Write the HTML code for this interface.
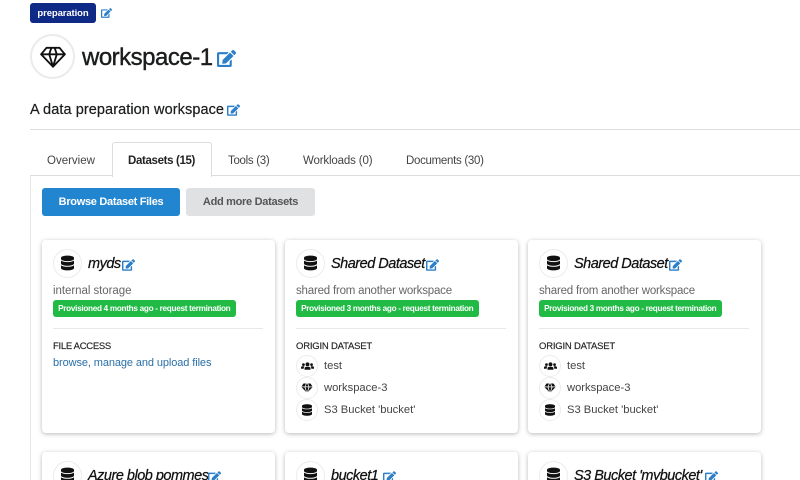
<!DOCTYPE html>
<html><head><meta charset="utf-8"><style>
html,body{margin:0;padding:0;width:800px;height:480px;overflow:hidden;background:#fff}
body{font-family:"Liberation Sans",sans-serif;color:#212529;position:relative}
.a{position:absolute;white-space:nowrap}
svg{position:absolute;display:block}
.card{position:absolute;width:232.5px;height:192.5px;background:#fff;border-radius:4px;box-shadow:0 1px 5px rgba(0,0,0,.28);overflow:hidden}
.wrap{position:absolute;left:0;top:0;width:800px;height:480px;overflow:hidden}
.circ{position:absolute;border-radius:50%;background:#fff;border:1px solid #ececec;box-sizing:border-box}
.name{position:absolute;left:46px;top:14px;font-size:14.5px;line-height:20px;font-style:italic;color:#111;white-space:nowrap;letter-spacing:-.5px;-webkit-text-stroke:.25px #111}
.sub{position:absolute;left:11px;top:44px;font-size:11.5px;line-height:15px;color:#666;white-space:nowrap;letter-spacing:-.2px}
.prov{position:absolute;left:11px;top:60px;width:182.5px;height:17px;background:#21ba45;border-radius:3px;color:#fff;font-size:8.2px;font-weight:bold;line-height:17px;text-align:center;white-space:nowrap;letter-spacing:-.3px}
.hr{position:absolute;left:11px;top:88px;width:210px;height:1px;background:#e8e8e8}
.h{position:absolute;left:11px;top:100px;font-size:9.5px;line-height:13px;color:#222;white-space:nowrap;letter-spacing:-.2px;-webkit-text-stroke:.15px #222}
.li{position:absolute;left:39px;font-size:11.2px;line-height:15px;color:#444;white-space:nowrap}
.tab{position:absolute;top:154px;font-size:11.5px;line-height:14px;color:#444;white-space:nowrap;letter-spacing:-.25px}
</style></head><body>
<svg width="0" height="0" style="position:absolute"><defs>
<symbol id="e" viewBox="0 0 576 512"><path fill="#2b7fc9" d="M402.6 83.2l90.2 90.2c3.8 3.8 3.8 10 0 13.8L274.4 405.6l-92.8 10.3c-12.4 1.4-22.9-9.1-21.5-21.5l10.3-92.8L388.8 83.2c3.8-3.8 10-3.8 13.8 0zm162-22.9l-48.8-48.8c-15.2-15.2-39.9-15.2-55.2 0l-35.4 35.4c-3.8 3.8-3.8 10 0 13.8l90.2 90.2c3.8 3.8 10 3.8 13.8 0l35.4-35.4c15.2-15.3 15.2-40 0-55.2zM384 346.2V448H64V128h229.8c3.2 0 6.2-1.3 8.5-3.5l40-40c7.6-7.6 2.2-20.5-8.5-20.5H48C21.5 64 0 85.5 0 112v352c0 26.5 21.5 48 48 48h352c26.5 0 48-21.5 48-48V306.2c0-10.7-12.9-16-20.5-8.5l-40 40c-2.2 2.3-3.5 5.3-3.5 8.5z"/></symbol>
<symbol id="d" viewBox="0 0 448 512"><path fill="#111" d="M448 73.143v45.714C448 159.143 347.667 192 224 192S0 159.143 0 118.857V73.143C0 32.857 100.333 0 224 0s224 32.857 224 73.143zM448 176v102.857C448 319.143 347.667 352 224 352S0 319.143 0 278.857V176c48.125 33.143 136.208 48.572 224 48.572S399.874 209.143 448 176zm0 160v102.857C448 479.143 347.667 512 224 512S0 479.143 0 438.857V336c48.125 33.143 136.208 48.572 224 48.572S399.874 369.143 448 336z"/></symbol>
<symbol id="g" viewBox="0 0 24 20"><path fill="none" stroke="#111" stroke-width="1.7" stroke-linejoin="round" d="M6 1.5h12l5 6-11 11.5L1 7.5zM1 7.5h22M8.5 7.5L12 19l3.500-11.500M8.500 7.500L10.500 1.500M15.500 7.500L13.500 1.500"/></symbol>
<symbol id="gs" viewBox="0 0 24 20"><path fill="#111" d="M5 1h5L7.500 7H1zM14 1h5l4 6h-6.500zM11.500 1h1L15 7H9zM1 8.500h6L10.500 18zM9 8.500h6L12 19zM17 8.500h6L13.500 18z"/></symbol>
<symbol id="u" viewBox="0 0 24 18"><g fill="#111"><circle cx="12" cy="6" r="3.600"/><circle cx="4.500" cy="6.500" r="2.500"/><circle cx="19.500" cy="6.500" r="2.500"/><path d="M6.500 16v-2.500C6.500 11.500 8 10.500 9.500 10.500h5c1.500 0 3 1 3 3V16zM0 14v-2c0-1.500 1-2.500 2.500-2.500H5c.5 0 1 .2 1.400.5C5.500 11 5 12.300 5 14zM24 14v-2c0-1.500-1-2.500-2.500-2.500H19c-.5 0-1 .2-1.400.5.900 1 1.400 2.300 1.400 4z"/></g></symbol>
</defs></svg>
<div class="wrap">
<div class="a" style="left:30px;top:3px;width:66px;height:20px;background:#0e2a86;border-radius:3px;color:#fff;font-size:9.500px;font-weight:bold;line-height:21px;text-align:center;letter-spacing:-.1px">preparation</div>
<svg style="left:101px;top:8px" width="11" height="10"><use href="#e"/></svg>

<div class="circ" style="left:30px;top:34px;width:45px;height:45px;border-width:2px;border-color:#ebebeb"></div>
<svg style="left:40px;top:46px" width="26" height="22"><use href="#g"/></svg>
<div class="a" style="left:82px;top:44px;font-size:24px;line-height:28px;color:#1b1c1d;letter-spacing:-.5px;-webkit-text-stroke:.4px #1b1c1d">workspace-1</div>
<svg style="left:217px;top:50px" width="19" height="17"><use href="#e"/></svg>

<div class="a" style="left:30px;top:102px;font-size:14.500px;line-height:17px;color:#1b1c1d;letter-spacing:.08px;-webkit-text-stroke:.2px #1b1c1d">A data preparation workspace</div>
<svg style="left:227px;top:104px" width="13" height="12"><use href="#e"/></svg>
<div class="a" style="left:30px;top:129px;width:770px;height:1px;background:#dedede"></div>

<div class="a" style="left:30px;top:175px;width:770px;height:1px;background:#dcdcdc"></div>
<div class="a" style="left:30px;top:175px;width:1px;height:305px;background:#e6e6e6"></div>
<div class="a" style="left:112px;top:142px;width:98px;height:34px;background:#fff;border:1px solid #dcdcdc;border-bottom:none;border-radius:3px 3px 0 0"></div>
<div class="tab" style="left:47px;letter-spacing:0">Overview</div>
<div class="tab" style="left:128px;font-weight:bold;color:#222;letter-spacing:-.35px">Datasets (15)</div>
<div class="tab" style="left:228px;letter-spacing:-.3px">Tools (3)</div>
<div class="tab" style="left:303px;letter-spacing:-.15px">Workloads (0)</div>
<div class="tab" style="left:406px;letter-spacing:-.3px">Documents (30)</div>

<div class="a" style="left:42px;top:188px;width:138px;height:28px;background:#2185d0;border-radius:3px;color:#fff;font-size:11px;font-weight:bold;line-height:29px;text-align:center;letter-spacing:-.3px">Browse Dataset Files</div>
<div class="a" style="left:186px;top:188px;width:129px;height:28px;background:#e0e1e2;border-radius:3px;color:#555;font-size:11px;font-weight:bold;line-height:29px;text-align:center;letter-spacing:-.3px">Add more Datasets</div>

<!-- card 1 -->
<div class="card" style="left:42px;top:240px">
<div class="circ" style="left:11px;top:9px;width:29px;height:29px"></div>
<svg style="left:19px;top:15px" width="13" height="16"><use href="#d"/></svg>
<div class="name">myds</div>
<svg style="left:80px;top:19px" width="13" height="12"><use href="#e"/></svg>
<div class="sub" style="letter-spacing:-.05px">internal storage</div>
<div class="prov">Provisioned 4 months ago - request termination</div>
<div class="hr"></div>
<div class="h" style="letter-spacing:-.3px">FILE ACCESS</div>
<div class="a" style="left:11px;top:116px;font-size:11px;line-height:14px;color:#2a6fa8;letter-spacing:-.1px">browse, manage and upload files</div>
</div>

<!-- card 2 -->
<div class="card" style="left:285px;top:240px">
<div class="circ" style="left:11px;top:9px;width:29px;height:29px"></div>
<svg style="left:19px;top:15px" width="13" height="16"><use href="#d"/></svg>
<div class="name">Shared Dataset</div>
<svg style="left:141px;top:19px" width="13" height="12"><use href="#e"/></svg>
<div class="sub">shared from another workspace</div>
<div class="prov">Provisioned 3 months ago - request termination</div>
<div class="hr"></div>
<div class="h">ORIGIN DATASET</div>
<div class="circ" style="left:11px;top:115px;width:22px;height:22px"></div><svg style="left:16px;top:121px" width="13" height="10"><use href="#u"/></svg><div class="li" style="top:119px">test</div>
<div class="circ" style="left:11px;top:137px;width:22px;height:22px"></div><svg style="left:16px;top:143px" width="12" height="10"><use href="#gs"/></svg><div class="li" style="top:141px">workspace-3</div>
<div class="circ" style="left:11px;top:159px;width:22px;height:22px"></div><svg style="left:17px;top:164px" width="10" height="12"><use href="#d"/></svg><div class="li" style="top:163px">S3 Bucket 'bucket'</div>
</div>

<!-- card 3 -->
<div class="card" style="left:528px;top:240px">
<div class="circ" style="left:11px;top:9px;width:29px;height:29px"></div>
<svg style="left:19px;top:15px" width="13" height="16"><use href="#d"/></svg>
<div class="name">Shared Dataset</div>
<svg style="left:141px;top:19px" width="13" height="12"><use href="#e"/></svg>
<div class="sub">shared from another workspace</div>
<div class="prov">Provisioned 3 months ago - request termination</div>
<div class="hr"></div>
<div class="h">ORIGIN DATASET</div>
<div class="circ" style="left:11px;top:115px;width:22px;height:22px"></div><svg style="left:16px;top:121px" width="13" height="10"><use href="#u"/></svg><div class="li" style="top:119px">test</div>
<div class="circ" style="left:11px;top:137px;width:22px;height:22px"></div><svg style="left:16px;top:143px" width="12" height="10"><use href="#gs"/></svg><div class="li" style="top:141px">workspace-3</div>
<div class="circ" style="left:11px;top:159px;width:22px;height:22px"></div><svg style="left:17px;top:164px" width="10" height="12"><use href="#d"/></svg><div class="li" style="top:163px">S3 Bucket 'bucket'</div>
</div>

<!-- row 2 -->
<div class="card" style="left:42px;top:452px">
<div class="circ" style="left:11px;top:9px;width:29px;height:29px"></div>
<svg style="left:19px;top:15px" width="13" height="16"><use href="#d"/></svg>
<div class="name">Azure blob pommes</div>
<svg style="left:166px;top:19px" width="13" height="12"><use href="#e"/></svg>
</div>
<div class="card" style="left:285px;top:452px">
<div class="circ" style="left:11px;top:9px;width:29px;height:29px"></div>
<svg style="left:19px;top:15px" width="13" height="16"><use href="#d"/></svg>
<div class="name">bucket1</div>
<svg style="left:98px;top:19px" width="13" height="12"><use href="#e"/></svg>
</div>
<div class="card" style="left:528px;top:452px">
<div class="circ" style="left:11px;top:9px;width:29px;height:29px"></div>
<svg style="left:19px;top:15px" width="13" height="16"><use href="#d"/></svg>
<div class="name">S3 Bucket 'mybucket'</div>
<svg style="left:177px;top:19px" width="13" height="12"><use href="#e"/></svg>
</div>
</div>
</body></html>
